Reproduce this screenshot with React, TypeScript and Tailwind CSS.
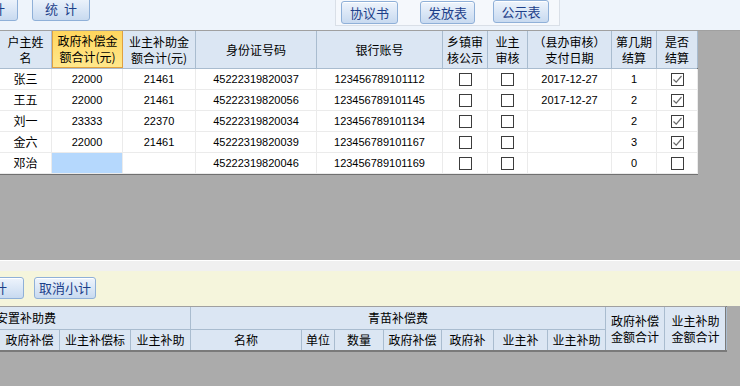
import React from 'react';

const cjk = "font-['Noto_Sans_CJK_SC','Noto_Sans',sans-serif]";
const num = "font-['Liberation_Sans','Noto_Sans_CJK_SC',sans-serif] text-[11px]";

const btn =
  'flex items-center justify-center rounded-[3px] border border-[#8fb0d8] bg-gradient-to-b from-[#eef4fc] to-[#c8daf0] text-[13px] text-[#1d3f8a] shadow-[inset_0_1px_0_#ffffff]';

// top grid columns
const topCols = 'grid-cols-[52px_71px_73px_121px_126px_45px_40px_84px_45px_41px]';
const botCols = 'grid-cols-[60px_71px_60px_111px_33px_49px_58px_52px_54px_58px_59px_62px]';

const rows = [
  { name: '张三', gov: '22000', owner: '21461', id: '45222319820037', bank: '123456789101112', date: '2017-12-27', period: '1', settled: true },
  { name: '王五', gov: '22000', owner: '21461', id: '45222319820056', bank: '123456789101145', date: '2017-12-27', period: '2', settled: true },
  { name: '刘一', gov: '23333', owner: '22370', id: '45222319820034', bank: '123456789101134', date: '', period: '2', settled: true },
  { name: '金六', gov: '22000', owner: '21461', id: '45222319820039', bank: '123456789101167', date: '', period: '3', settled: true },
  { name: '邓治', gov: '', owner: '', id: '45222319820046', bank: '123456789101169', date: '', period: '0', settled: false },
];

const Check: React.FC<{ on?: boolean }> = ({ on }) => (
  <div className="flex h-[13px] w-[13px] items-center justify-center border border-[#3c3c3c] bg-white">
    {on && (
      <svg width="11" height="11" viewBox="0 0 11 11">
        <path d="M1.5 5.5 L4.2 8.2 L9.5 2" fill="none" stroke="#6a6a6a" strokeWidth="1.2" />
      </svg>
    )}
  </div>
);

const H: React.FC<{ children: React.ReactNode; hl?: boolean }> = ({ children, hl }) => (
  <div
    className={`flex items-center justify-center border-r text-center leading-[16px] ${
      hl ? 'border-[#e0a040] bg-gradient-to-b from-[#ffd65c] to-[#ffe88c] border-l border-b' : 'border-[#a9bccf]'
    }`}
  >
    {children}
  </div>
);

const C: React.FC<{ children?: React.ReactNode; sel?: boolean; cls?: string }> = ({ children, sel, cls }) => (
  <div className={`flex items-center justify-center border-r border-b border-[#ebebeb] ${sel ? 'bg-[#b5d8fd]' : 'bg-white'} ${cls ?? ''}`}>
    {children}
  </div>
);

const B: React.FC<{ children: React.ReactNode; cls?: string }> = ({ children, cls }) => (
  <div className={`flex items-center justify-center overflow-hidden whitespace-nowrap border-r border-[#a9bccf] ${cls ?? ''}`}>
    {children}
  </div>
);

export default function App() {
  return (
    <div className={`relative h-[386px] w-[740px] overflow-hidden bg-[#ababab] text-[12px] text-black ${cjk}`}>
      {/* toolbar */}
      <div className="flex h-[31px] items-start border-b border-[#a0a0a0] bg-[#eef4fb]">
        <div className="-mt-[3px] -ml-[40px] flex gap-[14px]">
          <div className={`${btn} h-[24px] w-[58px]`}>合&nbsp;&nbsp;计</div>
          <div className={`${btn} h-[24px] w-[58px]`}>统&nbsp;&nbsp;计</div>
        </div>
        <div className="-mt-px ml-[245px] flex h-[27px] w-[225px] items-start border border-[#d9dfe7] bg-[#f5f8fc] pt-[1px] pl-[5px]">
          <div className={`${btn} h-[23px] w-[57px]`}>协议书</div>
          <div className={`${btn} ml-[22px] h-[23px] w-[55px]`}>发放表</div>
          <div className={`${btn} -mt-px ml-[18px] h-[23px] w-[56px]`}>公示表</div>
        </div>
      </div>

      {/* top table */}
      <div className="w-[698px] border-r border-b border-[#707070]">
        <div className={`grid h-[38px] ${topCols} border-b border-[#a9bccf] bg-[#dbe6f3]`}>
          <H>户主姓<br />名</H>
          <H hl>政府补偿金<br />额合计(元)</H>
          <H>业主补助金<br />额合计(元)</H>
          <H>身份证号码</H>
          <H>银行账号</H>
          <H>乡镇审<br />核公示</H>
          <H>业主<br />审核</H>
          <H>（县办审核）<br />支付日期</H>
          <H>第几期<br />结算</H>
          <H>是否<br />结算</H>
        </div>
        {rows.map((r, i) => (
          <div key={r.id} className={`grid h-[21px] ${topCols}`}>
            <C>{r.name}</C>
            <C sel={i === 4} cls={num}>{r.gov}</C>
            <C cls={num}>{r.owner}</C>
            <C cls={num}>{r.id}</C>
            <C cls={num}>{r.bank}</C>
            <C><Check /></C>
            <C><Check /></C>
            <C cls={num}>{r.date}</C>
            <C cls={num}>{r.period}</C>
            <C><Check on={r.settled} /></C>
          </div>
        ))}
      </div>

      <div className="h-[85px]" />

      {/* subtotal bar */}
      <div className="h-[11px] border-t border-white bg-[#f0f0f0]" />
      <div className="flex h-[35px] items-start gap-[10px] bg-[#f5f5dc] pt-[6px] -ml-[36px]">
        <div className={`${btn} h-[22px] w-[60px]`}>小计</div>
        <div className={`${btn} h-[22px] w-[62px]`}>取消小计</div>
      </div>

      {/* bottom table */}
      <div className="w-[727px] border-t border-r-2 border-b-2 border-t-[#a0a0a0] border-r-[#7a7a7a] border-b-[#7a7a7a] bg-[#dbe6f3] text-[12px]">
        <div className={`grid h-[43px] ${botCols} grid-rows-[23px_20px]`}>
          <div className="col-span-3 flex items-center overflow-hidden border-r border-b border-[#a9bccf]">
            <span className="-ml-[4px] whitespace-nowrap">安置补助费</span>
          </div>
          <div className="col-span-7 flex items-center justify-center border-r border-b border-[#a9bccf]">青苗补偿费</div>
          <B cls="row-span-2 text-center leading-[16px]">政府补偿<br />金额合计</B>
          <B cls="row-span-2 text-center leading-[16px]">业主补助<br />金额合计</B>
          <B>政府补偿</B>
          <B>业主补偿标</B>
          <B>业主补助</B>
          <B>名称</B>
          <B>单位</B>
          <B>数量</B>
          <B>政府补偿</B>
          <B>政府补</B>
          <B>业主补</B>
          <B>业主补助</B>
        </div>
      </div>
    </div>
  );
}
